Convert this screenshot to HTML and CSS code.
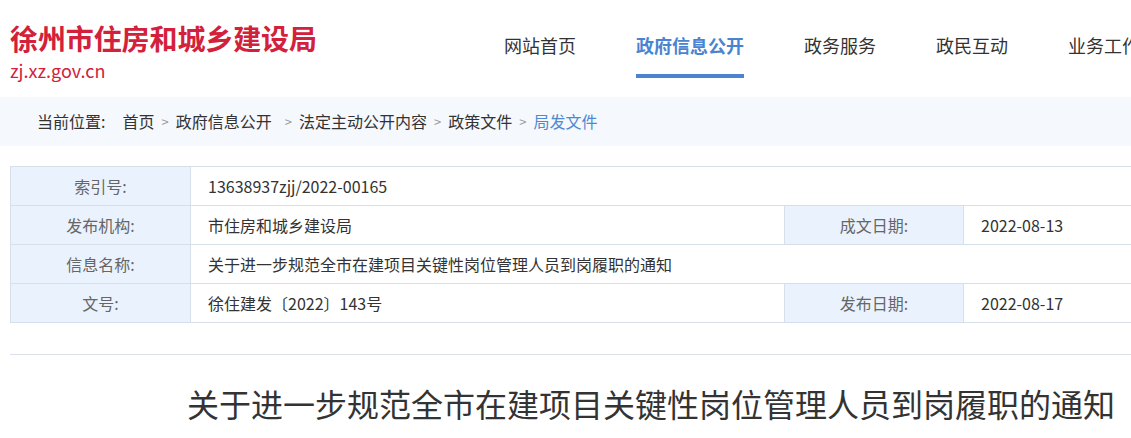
FILE: index.html
```html
<!DOCTYPE html>
<html lang="zh-CN">
<head>
<meta charset="utf-8">
<title>徐州市住房和城乡建设局</title>
<link rel="stylesheet" href="styles.css">
</head>
<body>
<header class="header">
  <div class="wrap header-inner">
    <div class="logo">
      <div class="logo-title">徐州市住房和城乡建设局</div>
      <div class="logo-url">zj.xz.gov.cn</div>
    </div>
    <nav class="nav">
      <a class="nav-item">网站首页</a>
      <a class="nav-item active">政府信息公开</a>
      <a class="nav-item">政务服务</a>
      <a class="nav-item">政民互动</a>
      <a class="nav-item">业务工作</a>
    </nav>
  </div>
</header>
<div class="crumb-band">
  <div class="wrap crumb">
    <span class="crumb-label">当前位置:</span>
    <span class="crumb-item">首页</span><span class="sep">&gt;</span>
    <span class="crumb-item">政府信息公开</span><span class="sep sep-wide">&gt;</span>
    <span class="crumb-item">法定主动公开内容</span><span class="sep">&gt;</span>
    <span class="crumb-item">政策文件</span><span class="sep">&gt;</span>
    <span class="crumb-item current">局发文件</span>
  </div>
</div>
<main class="wrap main">
  <table class="info">
    <colgroup>
      <col class="c-label"><col class="c-value"><col class="c-label2"><col class="c-value2">
    </colgroup>
    <tr>
      <th>索引号:</th>
      <td colspan="3">13638937zjj/2022-00165</td>
    </tr>
    <tr>
      <th>发布机构:</th>
      <td>市住房和城乡建设局</td>
      <th>成文日期:</th>
      <td>2022-08-13</td>
    </tr>
    <tr>
      <th>信息名称:</th>
      <td colspan="3">关于进一步规范全市在建项目关键性岗位管理人员到岗履职的通知</td>
    </tr>
    <tr>
      <th>文号:</th>
      <td>徐住建发〔2022〕143号</td>
      <th>发布日期:</th>
      <td>2022-08-17</td>
    </tr>
  </table>
  <div class="divider"></div>
  <h1 class="doc-title">关于进一步规范全市在建项目关键性岗位管理人员到岗履职的通知</h1>
</main>
</body>
</html>
```
FILE: styles.css
```css
html, body {
  margin: 0;
  padding: 0;
  background: #fff;
  overflow: hidden;
}
body {
  font-family: "Noto Sans CJK SC", "Microsoft YaHei", sans-serif;
  color: #333;
  width: 1131px;
}
.wrap {
  width: 1280px;
  padding-left: 10px;
  box-sizing: border-box;
}
.header {
  height: 97px;
  background: #fff;
}
.header-inner {
  display: flex;
  align-items: flex-start;
}
.logo {
  width: 494px;
  padding-top: 23px;
}
.logo-title {
  font-size: 28px;
  line-height: 30px;
  font-weight: bold;
  color: #d3213c;
  letter-spacing: -0.1px;
}
.logo-url {
  margin-top: 6px;
  font-size: 18px;
  line-height: 22px;
  color: #d3213c;
}
.nav {
  display: flex;
  gap: 60px;
}
.nav-item {
  display: block;
  padding-top: 33px;
  font-size: 18px;
  line-height: 24px;
  height: 41px;
  color: #333;
  white-space: nowrap;
  border-bottom: 4px solid transparent;
}
.nav-item.active {
  color: #4a84d0;
  font-weight: bold;
  border-bottom-color: #4a84d0;
}
.crumb-band {
  background: #f5f8fc;
  height: 49px;
}
.crumb {
  padding-left: 37px;
  font-size: 16px;
  line-height: 49px;
  white-space: nowrap;
  display: flex;
  align-items: center;
}
.crumb-label {
  margin-right: 17px;
}
.sep {
  color: #999;
  font-size: 13px;
  margin: 0 7px 0 7px;
}
.sep-wide {
  margin-left: 13px;
}
.crumb-item.current {
  color: #4f88d4;
}
.main {
  padding-top: 20px;
}
.info {
  border-collapse: collapse;
  width: 1200px;
  table-layout: fixed;
  font-size: 16px;
}
.c-label { width: 180px; }
.c-value { width: 594px; }
.c-label2 { width: 179px; }
.info th, .info td {
  border: 1px solid #d6e0ea;
  height: 38px;
  padding: 0;
  line-height: 22px;
  white-space: nowrap;
}
.info th {
  background: #eaf3fd;
  color: #666;
  font-weight: normal;
  text-align: center;
}
.info td {
  color: #333;
  padding-left: 17px;
  text-align: left;
}
.divider {
  margin-top: 31px;
  height: 1px;
  background: #d9e1ea;
}
.doc-title {
  margin: 26px 0 0 0;
  padding-left: 177px;
  font-size: 32px;
  line-height: 44px;
  font-weight: normal;
  color: #333;
  white-space: nowrap;
}
```
